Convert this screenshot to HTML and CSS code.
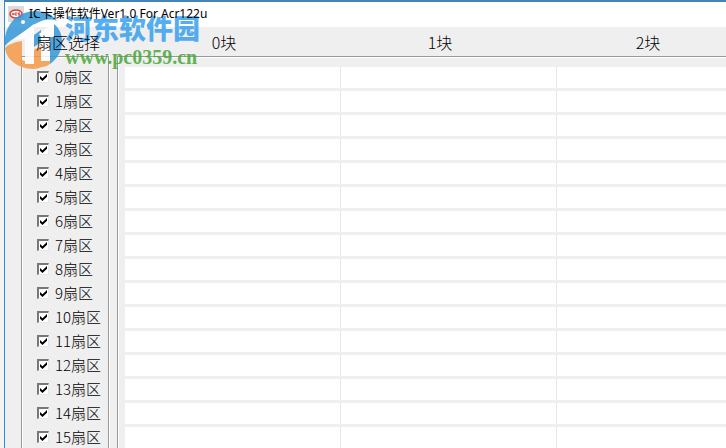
FILE: index.html
```html
<!DOCTYPE html>
<html lang="zh-CN">
<head>
  <meta charset="UTF-8">
  <title>IC卡操作软件</title>
  <link rel="stylesheet" href="styles.css">
</head>
<body>
  <div class="window">
    <header class="titlebar">
      <svg class="app-icon" viewBox="0 0 16 16">
        <rect width="16" height="16" fill="#dcdcdc"/>
        <ellipse cx="8" cy="8" rx="6" ry="4" fill="#fff" stroke="#d8403c" stroke-width="1.5"/>
        <path d="M4 9l1-2 1 2M9 7H7v2h2M12 7h-2v1h2v1h-2" fill="none" stroke="#d8403c"/>
      </svg>
      <h1>IC卡操作软件Ver1.0 For Acr122u</h1>
    </header>

    <div class="heads">
      <span class="head-select">扇区选择</span>
      <div class="head-blocks">
        <span>0块</span>
        <span>1块</span>
        <span>2块</span>
      </div>
    </div>

    <main class="content">
      <div class="sectors" id="sectors"></div>
      <div class="blocks" id="blocks"></div>
    </main>
  </div>

  <div class="watermark">
    <svg class="logo" viewBox="0 0 58 60">
      <path d="M1 36C-1 15 14 1 32 1c10 0 17 4 21 10-8-3-15-1-22 3L9 29c-3 2-6 4-8 7z" fill="#3498d8"/>
      <path d="M30 25l7-5v12l-7 5z" fill="#3498d8"/>
      <path d="M50 14c5 4 8 10 8 17 0 11-5 18-12 23V27h-4l8-7z" fill="#3498d8"/>
      <path d="M1 38c4-4 10-6 17-7v26C9 54 2 47 1 38z" fill="#f59a48"/>
      <path d="M29 40l9-4v21c-3 1-6 2-9 2z" fill="#f59a48"/>
      <path d="M18 50l11 4v5c-4 0-8-1-11-2z" fill="#f59a48"/>
      <path d="M38 48l8 3v3c-3 2-5 3-8 3z" fill="#f59a48"/>
      <circle cx="19" cy="12" r="2" fill="#fff"/>
      <path d="M9 30l21-16v40h-9V29zM35 24l15-12v15h-4v24h-9V27z" fill="#fff"/>
    </svg>
    <div>
      <div class="site-name">河东软件园</div>
      <div class="site-url">www.pc0359.cn</div>
    </div>
  </div>

  <script>
    const sectors = document.getElementById('sectors');
    const blocks = document.getElementById('blocks');

    for (let i = 0; i < 16; i++) {
      const label = document.createElement('label');
      label.innerHTML = `<input type="checkbox" checked><span>${i}扇区</span>`;
      sectors.appendChild(label);

      for (let j = 0; j < 3; j++) {
        const input = document.createElement('input');
        input.type = 'text';
        input.setAttribute('aria-label', `${i}扇区 ${j}块`);
        blocks.appendChild(input);
      }
    }
  </script>
</body>
</html>
```

FILE: styles.css
```css
body {
  margin: 0;
  height: 100vh;
  overflow: hidden;
  background: #f4f4f4;
  color: #000;
  font-family: "Noto Sans CJK SC", sans-serif;
}

.window {
  margin-left: 4px;
  border-top: 2px solid #4385b5;
  border-left: 1px solid #2f8fd0;
  background: #efefef;
}

.titlebar {
  display: flex;
  align-items: flex-start;
  gap: 5px;
  height: 25px;
  padding-left: 3px;
  background: #fff;
}

.app-icon {
  width: 16px;
  height: 16px;
  margin-top: 4px;
}

h1 {
  position: relative;
  z-index: 1;
  margin: 0;
  font: 12px/24px "Noto Sans", "Noto Sans CJK SC", sans-serif;
}

.heads {
  display: flex;
  align-items: center;
  height: 29px;
  padding-left: 31px;
  box-sizing: border-box;
  font-size: 16px;
  font-weight: 300;
}

.head-select {
  position: relative;
  z-index: 1;
  flex: none;
  width: 80px;
}

.head-blocks {
  display: grid;
  grid-template-columns: 216px 216px 200px;
  text-align: center;
}

.content {
  display: flex;
  gap: 8px;
  padding-left: 16px;
}

.sectors {
  flex: none;
  width: 86px;
  padding-top: 8px;
  border: 1px solid #999;
  box-shadow: inset 1px 1px #fff, 1px 0 #fff;
}

.sectors label {
  display: flex;
  align-items: center;
  gap: 6px;
  height: 24px;
  padding-left: 15px;
  font-size: 15px;
  font-weight: 300;
  line-height: 22px;
  white-space: nowrap;
}

.sectors input {
  appearance: none;
  flex: none;
  display: grid;
  place-items: center;
  width: 12px;
  height: 12px;
  margin: 0;
  border: 1px solid #e8e8e8;
  border-top: 2px solid #777;
  border-left: 2px solid #777;
  background: #fff;
}

.sectors input:checked::before {
  content: "";
  width: 7px;
  height: 7px;
  background: #000;
  clip-path: polygon(0 29%, 36% 60%, 100% 0, 100% 38%, 36% 100%, 0 67%);
}

.blocks {
  flex: 1;
  display: grid;
  grid-template-columns: repeat(3, 216px);
  grid-auto-rows: 21px;
  row-gap: 3px;
  padding: 10px 0 0 7px;
  overflow: hidden;
  border-top: 1px solid #999;
  border-left: 1px solid #999;
  box-shadow: inset 1px 1px #fff;
}

.blocks input {
  min-width: 0;
  padding: 0 4px;
  border: 0;
  border-right: 1px solid #e8e8e8;
  background: #fff;
}

.watermark {
  position: absolute;
  top: 10px;
  left: 4px;
  display: flex;
  gap: 3px;
  opacity: 0.85;
  pointer-events: none;
}

.logo {
  width: 58px;
  height: 60px;
}

.site-name {
  color: #38a0ee;
  font: 900 27px/36px "Noto Sans CJK SC", sans-serif;
}

.site-url {
  color: #48a838;
  font: bold 20px/22px "Liberation Serif", serif;
}
```
